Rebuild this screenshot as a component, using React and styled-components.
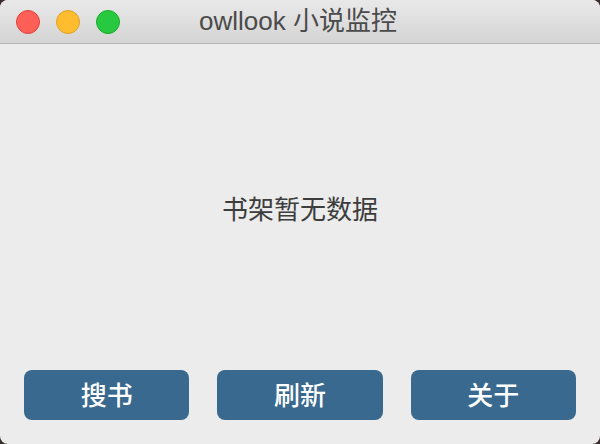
import styled, { createGlobalStyle } from 'styled-components';

const Global = createGlobalStyle`
    html, body {
        margin: 0;
        padding: 0;
        background: #3a2d2d;
    }
    body {
        font-family: "Noto Sans CJK SC", "Noto Sans", sans-serif;
    }
`;

const Window = styled.div`
    width: 600px;
    height: 444px;
    display: flex;
    flex-direction: column;
    background: #ececec;
    border-radius: 8px;
    overflow: hidden;
`;

const TitleBar = styled.header`
    position: relative;
    height: 43px;
    flex-shrink: 0;
    display: flex;
    align-items: center;
    justify-content: center;
    background: linear-gradient(#e9e9e9, #d4d4d4);
    border-bottom: 1px solid #b4b4b4;
`;

const Lights = styled.div`
    position: absolute;
    left: 16px;
    top: 10px;
    display: flex;
    gap: 16px;
`;

const Light = styled.span`
    width: 22px;
    height: 22px;
    border-radius: 50%;
    background: ${p => p.fill};
    border: 1px solid ${p => p.edge};
`;

const Title = styled.h1`
    margin: 0 0 2px -4px;
    font-family: "Liberation Sans", "Noto Sans CJK SC", sans-serif;
    font-size: 26px;
    line-height: 1;
    font-weight: 400;
    color: #4b4b4b;
`;

const Content = styled.main`
    flex: 1;
    display: flex;
    align-items: center;
    justify-content: center;
`;

const Empty = styled.p`
    margin: 0;
    font-size: 26px;
    color: #3d3d3d;
`;

const Footer = styled.footer`
    display: grid;
    grid-template-columns: repeat(3, 1fr);
    gap: 28px;
    padding: 0 24px 24px;
`;

const Button = styled.button`
    height: 50px;
    border: none;
    border-radius: 8px;
    background: #39698e;
    color: #fff;
    font-family: inherit;
    font-size: 26px;
    line-height: 1;
    font-weight: 500;
    padding: 0 0 3px;
`;

const App = () => {
    return (
        <>
            <Global />
            <Window>
                <TitleBar>
                    <Lights>
                        <Light fill="#fe5f57" edge="#e0443e" />
                        <Light fill="#febc2e" edge="#dea123" />
                        <Light fill="#28c840" edge="#1aab29" />
                    </Lights>
                    <Title>owllook 小说监控</Title>
                </TitleBar>
                <Content>
                    <Empty>书架暂无数据</Empty>
                </Content>
                <Footer>
                    <Button>搜书</Button>
                    <Button>刷新</Button>
                    <Button>关于</Button>
                </Footer>
            </Window>
        </>
    );
}

export default App;
